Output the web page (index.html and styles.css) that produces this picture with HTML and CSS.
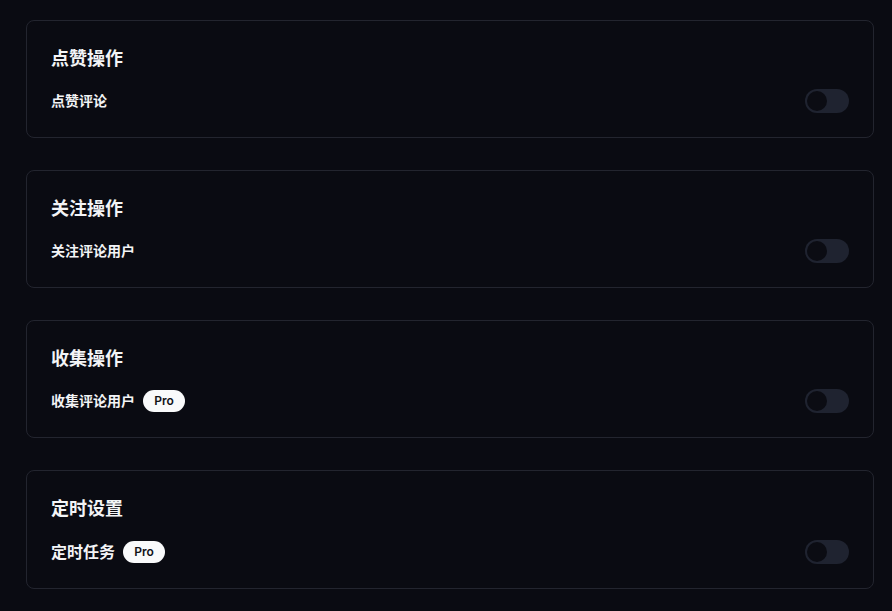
FILE: index.html
```html
<!DOCTYPE html>
<html lang="zh">
<head>
    <meta charset="UTF-8">
    <meta name="viewport" content="width=device-width, initial-scale=1.0">
    <title>评论操作设置</title>
    <link rel="stylesheet" href="styles.css">
</head>
<body>
    <div class="settings">
        <section class="card">
            <h3 class="card-title">点赞操作</h3>
            <div class="row">
                <span class="label">点赞评论</span>
                <label class="switch"><input type="checkbox"><span class="slider"></span></label>
            </div>
        </section>
        <section class="card">
            <h3 class="card-title">关注操作</h3>
            <div class="row">
                <span class="label">关注评论用户</span>
                <label class="switch"><input type="checkbox"><span class="slider"></span></label>
            </div>
        </section>
        <section class="card">
            <h3 class="card-title">收集操作</h3>
            <div class="row">
                <span class="label">收集评论用户 <span class="badge">Pro</span></span>
                <label class="switch"><input type="checkbox"><span class="slider"></span></label>
            </div>
        </section>
        <section class="card">
            <h3 class="card-title">定时设置</h3>
            <div class="row row-lg">
                <span class="label label-lg">定时任务 <span class="badge">Pro</span></span>
                <label class="switch"><input type="checkbox"><span class="slider"></span></label>
            </div>
        </section>
    </div>
</body>
</html>
```

FILE: styles.css
```css
body {
    margin: 0;
    background-color: #0a0b12;
    color: #f3f4f6;
    font-family: Inter, "Noto Sans CJK SC", sans-serif;
}
.settings {
    display: flex;
    flex-direction: column;
    gap: 32px;
    padding: 20px 18px 20px 26px;
}
.card {
    border: 1px solid #23252f;
    border-radius: 8px;
    padding: 24px;
}
.card-title {
    margin: 0 0 16px;
    font-size: 18px;
    line-height: 28px;
    font-weight: 700;
}
.row {
    display: flex;
    align-items: center;
    justify-content: space-between;
    height: 24px;
}
.row-lg {
    height: 25px;
}
.label {
    display: flex;
    align-items: center;
    gap: 8px;
    font-size: 14px;
    font-weight: 700;
    line-height: 20px;
}
.label-lg {
    font-size: 16px;
}
.badge {
    display: inline-flex;
    align-items: center;
    justify-content: center;
    width: 42px;
    height: 22px;
    border-radius: 11px;
    background-color: #f9fafb;
    color: #111218;
    font-size: 12px;
    font-weight: 600;
}
.switch {
    position: relative;
    display: inline-block;
    width: 44px;
    height: 24px;
}
.switch input {
    display: none;
}
.slider {
    position: absolute;
    inset: 0;
    background-color: #1f2330;
    border-radius: 12px;
    cursor: pointer;
}
.slider::before {
    content: "";
    position: absolute;
    left: 2px;
    top: 2px;
    width: 20px;
    height: 20px;
    border-radius: 50%;
    background-color: #0b0c13;
}
```
